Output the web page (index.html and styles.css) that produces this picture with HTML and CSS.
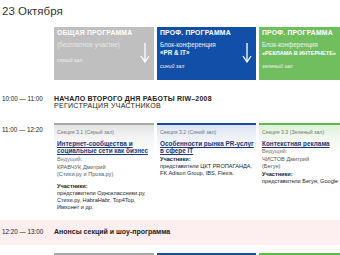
FILE: index.html
```html
<!DOCTYPE html>
<html lang="ru">
<head>
<meta charset="utf-8">
<link rel="stylesheet" href="styles.css">
</head>
<body>
<div class="page">
  <div class="date">23 Октября</div>

  <div class="grid head">
    <div></div>
    <div class="hbox gray">
      <div class="htitle">ОБЩАЯ ПРОГРАММА</div>
      <div class="hsub">(бесплатное участие)</div>
      <div class="hall">серый зал</div>
      <svg class="arrow" viewBox="0 0 10 20" width="10" height="20"><path d="M5 0V18M1 13L5 19L9 13" fill="none" stroke="#fff" stroke-width="1.3"/></svg>
    </div>
    <div class="hbox blue">
      <div class="htitle">ПРОФ. ПРОГРАММА</div>
      <div class="hsub">Блок-конференция<br><b>«PR &amp; IT»</b></div>
      <div class="hall">синий зал</div>
      <svg class="arrow" viewBox="0 0 10 20" width="10" height="20"><path d="M5 0V18M1 13L5 19L9 13" fill="none" stroke="#fff" stroke-width="1.3"/></svg>
    </div>
    <div class="hbox green">
      <div class="htitle">ПРОФ. ПРОГРАММА</div>
      <div class="hsub">Блок-конференция<br><b class="long">«РЕКЛАМА В ИНТЕРНЕТЕ»</b></div>
      <div class="hall">зеленый зал</div>
    </div>
  </div>

  <div class="grid row first">
    <div class="time">10:00 — 11:00</div>
    <div class="wide"><b>НАЧАЛО ВТОРОГО ДНЯ РАБОТЫ RIW–2008</b><br><span class="reg">РЕГИСТРАЦИЯ УЧАСТНИКОВ</span></div>
  </div>

  <div class="grid row sessions">
    <div class="time t2">11:00 — 12:20</div>
    <div class="cell c-gray">
      <div class="sec">Секция 3.1 (Серый зал)</div>
      <a class="stitle">Интернет-сообщества и социальные сети как бизнес</a>
      <div class="lbl">Ведущий:</div>
      <div class="txt">КРАВЧУК Дмитрий<br>(Стихи.ру и Проза.ру)</div>
      <div class="part"><b>Участники:</b><br>представители Одноклассники.ру, Стихи.ру, HabraHabr, Top4Top, Имхонет и др.</div>
    </div>
    <div class="cell c-blue">
      <div class="sec">Секция 3.2 (Синий зал)</div>
      <a class="stitle">Особенности рынка PR-услуг в сфере IT</a>
      <div class="part p2"><b>Участники:</b><br>представители ЦКТ PROПАГАНДА, FK Adison Group, IBS, Flexis.</div>
    </div>
    <div class="cell c-green">
      <div class="sec">Секция 3.3 (Зеленый зал)</div>
      <a class="stitle">Контекстная реклама</a>
      <div class="lbl l2">Ведущий:</div>
      <div class="txt">ЧИСТОВ Дмитрий<br>(Бегун)</div>
      <div class="part p3"><b>Участники:</b><br>представители Бегун, Google и др.</div>
    </div>
  </div>

  <div class="grid row pink">
    <div class="time">12:20 — 13:00</div>
    <div class="wide"><b class="ann">Анонсы секций и шоу-программа</b></div>
  </div>

  <div class="grid row sessions">
    <div class="time t2">13:00 — 14:20</div>
    <div class="cell c-gray"><div class="sec">Секция 4.1 (Серый зал)</div></div>
    <div class="cell c-blue"><div class="sec">Секция 4.2 (Синий зал)</div></div>
    <div class="cell c-green"><div class="sec">Секция 4.3 (Зеленый зал)</div></div>
  </div>
</div>
</body>
</html>
```

FILE: styles.css
```css
html, body {
  margin: 0;
  padding: 0;
  background: #fff;
}
body {
  font-family: "Liberation Sans", Arial, sans-serif;
  color: #222;
  width: 340px;
  height: 255px;
  overflow: hidden;
}
.page {
  width: 360px;
}
.date {
  font-size: 11.5px;
  color: #333;
  padding: 4px 0 0 2px;
  height: 23px;
  line-height: 14px;
}
.grid {
  display: grid;
  grid-template-columns: 51px 100px 99px 104px;
  column-gap: 3px;
}
.hbox {
  position: relative;
  height: 53px;
  padding: 2px 3px 0 3px;
  box-sizing: border-box;
  color: #fff;
  font-size: 6.3px;
  line-height: 8px;
  white-space: nowrap;
}
.hbox.gray { background: #bfbfbf; }
.hbox.blue { background: #124fa9; }
.hbox.green { background: #71be5f; }
.htitle {
  font-weight: bold;
  font-size: 6.8px;
  letter-spacing: 0.2px;
  margin-bottom: 4px;
}
.hsub {
  color: #f0f0f0;
}
.gray .hsub { color: #e8e8e8; }
.hsub b { color: #fff; }
.hsub b.long {
  font-size: 5.7px;
  letter-spacing: -0.1px;
}
.hall {
  font-style: italic;
  font-size: 5.3px;
  line-height: 7px;
  margin-top: 6px;
  color: #f0f0f0;
}
.gray .hall { margin-top: 8px; }
.arrow {
  position: absolute;
  right: 4px;
  top: 16px;
}
.row {
  font-size: 6px;
  line-height: 7px;
}
.time {
  padding-left: 2px;
  font-size: 6.3px;
  color: #222;
  white-space: nowrap;
}
.first {
  margin-top: 15px;
}
.wide {
  grid-column: 2 / 5;
  font-size: 7px;
  white-space: nowrap;
}
.wide b { letter-spacing: 0.22px; }
.wide .reg { letter-spacing: 0.3px; }
.wide b.ann { letter-spacing: 0; }
.sessions {
  margin-top: 14px;
}
.t2 { padding-top: 3px; }
.cell {
  border-top: 2px solid #a9a9a9;
  padding: 4px 2px 6px 3px;
  font-size: 5.6px;
  line-height: 7px;
  min-height: 80px;
}
.c-gray {
  border-top-color: #a8a8a8;
  background: linear-gradient(#e2e2e2, #f4f4f4 12px, #fff 30px);
}
.c-blue {
  border-top-color: #1c4aa0;
  background: linear-gradient(#dde5f3, #f0f3fa 14px, #fff 30px);
}
.c-green {
  border-top-color: #5cba4a;
  background: linear-gradient(#dff0da, #f2f9f0 14px, #fff 30px);
}
.sec {
  color: #777;
  font-size: 5.2px;
  margin-bottom: 4px;
  white-space: nowrap;
}
.stitle {
  display: block;
  font-weight: bold;
  font-size: 6.4px;
  color: #1c3778;
  text-decoration: underline;
}
.lbl {
  color: #777;
  margin-top: 2px;
}
.l2 { margin-top: 1px; }
.txt {
  color: #555;
  margin-top: 1px;
}
.part {
  margin-top: 5px;
  color: #222;
  font-size: 5.6px;
}
.p2 { margin-top: 2px; }
.p3 { margin-top: 1px; white-space: nowrap; }
.pink {
  background: #fdeef0;
  margin-top: 3px;
  padding: 8px 0 8px 0;
  height: 25px;
  box-sizing: border-box;
}
.pink + .sessions { margin-top: 8px; }
```
